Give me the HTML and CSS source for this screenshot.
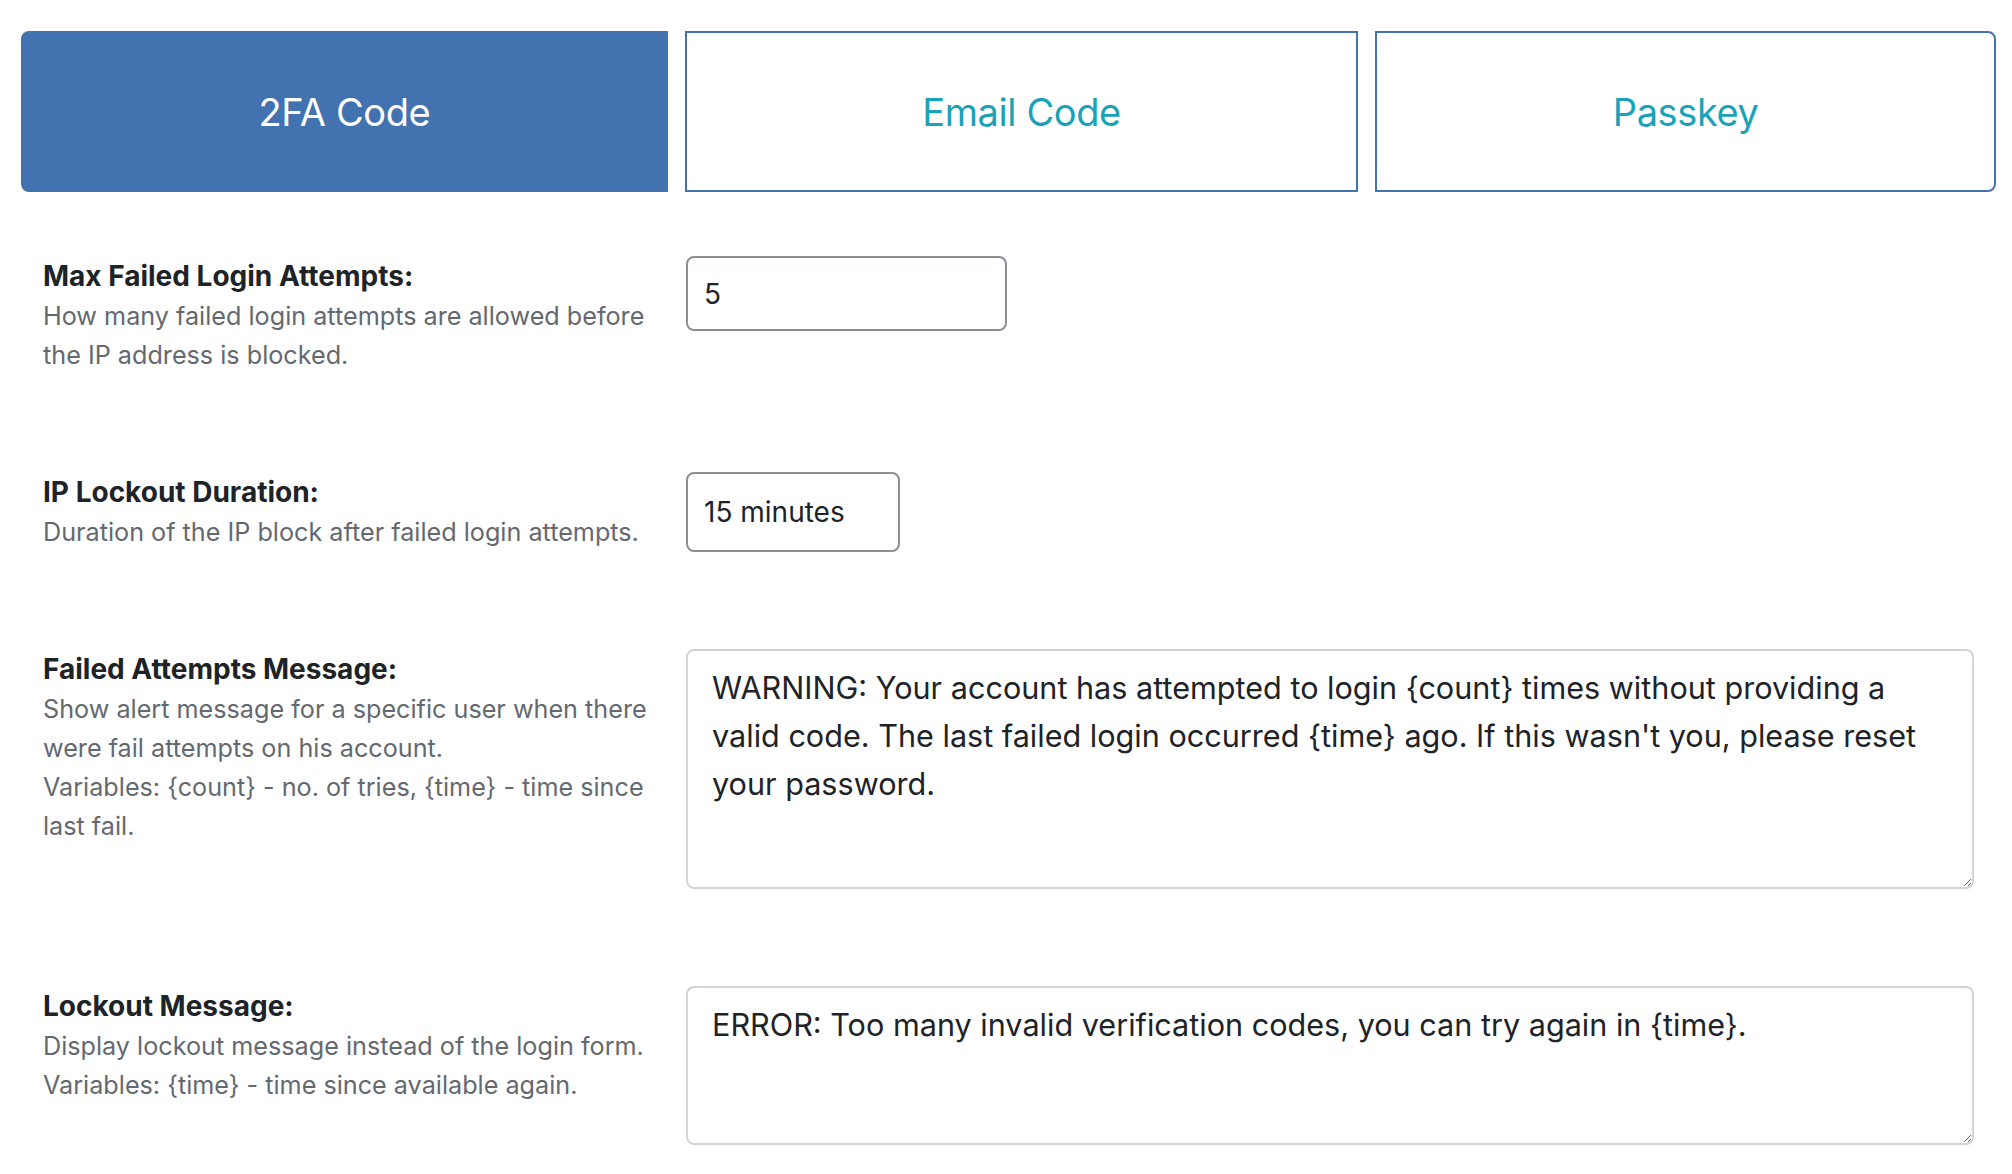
FILE: index.html
```html
<!DOCTYPE html>
<html lang="en">
<head>
<meta charset="utf-8">
<title>Login Security Settings</title>
<link rel="stylesheet" href="styles.css">
</head>
<body>
<div class="page">
  <nav class="tabs">
    <button class="tab tab-active">2FA Code</button>
    <button class="tab">Email Code</button>
    <button class="tab">Passkey</button>
  </nav>

  <form class="settings">
    <div class="row">
      <div class="label-col">
        <div class="label">Max Failed Login Attempts:</div>
        <div class="desc">How many failed login attempts are allowed before<br>the IP address is blocked.</div>
      </div>
      <div class="field-col">
        <input class="input input-num" type="text" value="5">
      </div>
    </div>

    <div class="row">
      <div class="label-col">
        <div class="label">IP Lockout Duration:</div>
        <div class="desc">Duration of the IP block after failed login attempts.</div>
      </div>
      <div class="field-col">
        <div class="input input-select">15 minutes</div>
      </div>
    </div>

    <div class="row">
      <div class="label-col">
        <div class="label">Failed Attempts Message:</div>
        <div class="desc">Show alert message for a specific user when there<br>were fail attempts on his account.<br>Variables: {count} - no. of tries, {time} - time since<br>last fail.</div>
      </div>
      <div class="field-col">
        <textarea class="textarea textarea-tall">WARNING: Your account has attempted to login {count} times without providing a valid code. The last failed login occurred {time} ago. If this wasn't you, please reset your password.</textarea>
      </div>
    </div>

    <div class="row">
      <div class="label-col">
        <div class="label">Lockout Message:</div>
        <div class="desc">Display lockout message instead of the login form.<br>Variables: {time} - time since available again.</div>
      </div>
      <div class="field-col">
        <textarea class="textarea textarea-short">ERROR: Too many invalid verification codes, you can try again in {time}.</textarea>
      </div>
    </div>
  </form>
</div>
</body>
</html>
```

FILE: styles.css
```css
html, body {
  margin: 0;
  padding: 0;
  background: #ffffff;
}

body {
  font-family: "Inter", "Roboto", "Liberation Sans", sans-serif;
  color: #1d2327;
}

.page {
  padding: 31px 16px 0 21px;
}

.tabs {
  display: flex;
  gap: 17px;
}

.tab {
  flex: 1 1 auto;
  height: 161px;
  box-sizing: border-box;
  background: #ffffff;
  border: 2px solid #4272b0;
  border-radius: 0;
  font-family: "Inter", "Roboto", sans-serif;
  font-size: 38px;
  font-weight: 400;
  color: #1aa3b8;
  letter-spacing: -0.4px;
  padding: 0 20px;
  cursor: pointer;
}

.tab:first-child {
  border-radius: 8px 0 0 8px;
}

.tab:last-child {
  border-radius: 0 8px 8px 0;
}

.tab-active {
  background: #4272b0;
  color: #ffffff;
}

.settings {
  margin-top: 64px;
  width: 1953px;
}

.row {
  display: grid;
  grid-template-columns: 665px 1288px;
  margin-bottom: 97px;
}

.row:last-child {
  margin-bottom: 0;
}

.label-col {
  padding-left: 22px;
}

.label {
  font-size: 28px;
  font-weight: 700;
  line-height: 40px;
  color: #1d2327;
}

.desc {
  font-size: 25.2px;
  line-height: 39px;
  color: #646970;
  margin-top: 1px;
}

.field-col {
  display: flex;
  align-items: flex-start;
}

.input {
  box-sizing: border-box;
  border: 2px solid #8c8f94;
  border-radius: 8px;
  background: #ffffff;
  font-family: "Inter", "Roboto", sans-serif;
  font-size: 28px;
  color: #1d2327;
  padding: 0 16px;
  outline: none;
}

.input-num {
  width: 321px;
  height: 75px;
}

.input-select {
  width: 214px;
  height: 80px;
  display: flex;
  align-items: center;
}

.textarea {
  box-sizing: border-box;
  width: 1288px;
  border: 2px solid #d0d4da;
  border-radius: 8px;
  background: #ffffff;
  font-family: "Inter", "Roboto", sans-serif;
  font-size: 30.6px;
  line-height: 48px;
  color: #1d2327;
  padding: 13px 24px;
  outline: none;
  resize: vertical;
}

.textarea-tall {
  height: 240px;
}

.textarea-short {
  height: 159px;
}
```
